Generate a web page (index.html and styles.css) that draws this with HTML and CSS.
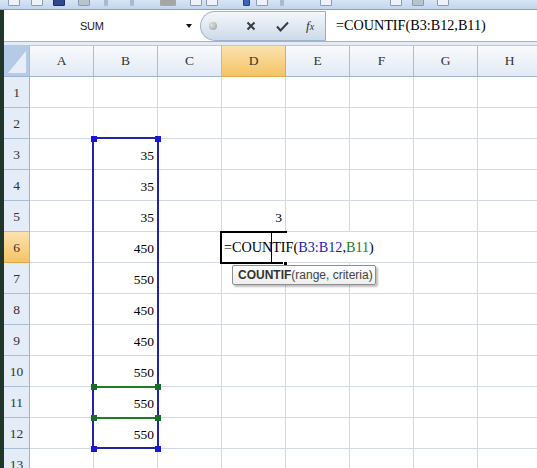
FILE: index.html
```html
<!DOCTYPE html>
<html lang="en">
<head>
<meta charset="UTF-8">
<title>COUNTIF</title>
<link rel="stylesheet" href="styles.css">
</head>
<body>

<div class="toolbar">
  <span class="tb-icon light" style="left: 8px;"></span>
  <span class="tb-icon light" style="left: 31px;"></span>
  <span class="tb-icon dark" style="left: 53px;"></span>
  <span class="tb-icon grey" style="left: 78px;"></span>
  <span class="tb-icon faint" style="left: 104px;"></span>
  <span class="tb-icon faint" style="left: 130px;"></span>
  <span class="tb-icon block" style="left: 160px;"></span>
  <span class="tb-icon light" style="left: 190px;"></span>
  <span class="tb-icon light" style="left: 206px;"></span>
  <span class="tb-icon blue" style="left: 243px;"></span>
  <span class="tb-icon light" style="left: 256px;"></span>
  <span class="tb-icon faint" style="left: 280px;"></span>
  <span class="tb-icon light" style="left: 320px;"></span>
  <span class="tb-icon light" style="left: 390px;"></span>
  <span class="tb-icon grey" style="left: 412px;"></span>
  <span class="tb-icon light" style="left: 437px;"></span>
</div>

<div class="app">
  <div class="formula-bar">
    <div class="name-box">
      <span class="name">SUM</span>
      <span class="drop"></span>
    </div>
    <div class="fx-buttons">
      <span class="knob"></span>
      <svg class="btn-x" width="10" height="10" viewBox="0 0 10 10">
        <path d="M1.5 1.5 L8.5 8.5 M8.5 1.5 L1.5 8.5" stroke="#3b3b3b" stroke-width="2" fill="none"/>
      </svg>
      <svg class="btn-ok" width="13" height="11" viewBox="0 0 13 11">
        <path d="M1 5.5 L4.5 9.5 L12 1.5" stroke="#3b3b3b" stroke-width="2" fill="none"/>
      </svg>
      <span class="fx">f<span class="fx-x">x</span></span>
    </div>
    <div class="formula">=COUNTIF(B3:B12,B11)</div>
  </div>
  <div class="bar-gap"></div>

  <div class="sheet">
    <div class="grid">
      <div class="hd corner"></div><div class="hd col">A</div><div class="hd col">B</div><div class="hd col">C</div><div class="hd col on">D</div><div class="hd col">E</div><div class="hd col">F</div><div class="hd col">G</div><div class="hd col">H</div>

      <div class="rh">1</div><div class="c"></div><div class="c"></div><div class="c"></div><div class="c"></div><div class="c"></div><div class="c"></div><div class="c"></div><div class="c"></div>
      <div class="rh">2</div><div class="c"></div><div class="c"></div><div class="c"></div><div class="c"></div><div class="c"></div><div class="c"></div><div class="c"></div><div class="c"></div>
      <div class="rh">3</div><div class="c"></div><div class="c num">35</div><div class="c"></div><div class="c"></div><div class="c"></div><div class="c"></div><div class="c"></div><div class="c"></div>
      <div class="rh">4</div><div class="c"></div><div class="c num">35</div><div class="c"></div><div class="c"></div><div class="c"></div><div class="c"></div><div class="c"></div><div class="c"></div>
      <div class="rh">5</div><div class="c"></div><div class="c num">35</div><div class="c"></div><div class="c num">3</div><div class="c"></div><div class="c"></div><div class="c"></div><div class="c"></div>
      <div class="rh on">6</div><div class="c"></div><div class="c num">450</div><div class="c"></div><div class="c edit"><span class="edit-text">=COUNTIF(<span class="ref-blue">B3:B12</span>,<span class="ref-green">B11</span>)</span></div><div class="c flow"></div><div class="c"></div><div class="c"></div><div class="c"></div>
      <div class="rh">7</div><div class="c"></div><div class="c num">550</div><div class="c"></div><div class="c"></div><div class="c"></div><div class="c"></div><div class="c"></div><div class="c"></div>
      <div class="rh">8</div><div class="c"></div><div class="c num">450</div><div class="c"></div><div class="c"></div><div class="c"></div><div class="c"></div><div class="c"></div><div class="c"></div>
      <div class="rh">9</div><div class="c"></div><div class="c num">450</div><div class="c"></div><div class="c"></div><div class="c"></div><div class="c"></div><div class="c"></div><div class="c"></div>
      <div class="rh">10</div><div class="c"></div><div class="c num">550</div><div class="c"></div><div class="c"></div><div class="c"></div><div class="c"></div><div class="c"></div><div class="c"></div>
      <div class="rh">11</div><div class="c"></div><div class="c num">550</div><div class="c"></div><div class="c"></div><div class="c"></div><div class="c"></div><div class="c"></div><div class="c"></div>
      <div class="rh">12</div><div class="c"></div><div class="c num">550</div><div class="c"></div><div class="c"></div><div class="c"></div><div class="c"></div><div class="c"></div><div class="c"></div>
      <div class="rh">13</div><div class="c"></div><div class="c"></div><div class="c"></div><div class="c"></div><div class="c"></div><div class="c"></div><div class="c"></div><div class="c"></div>
    </div>

    <!-- range B3:B12 and the B11 reference -->
    <div class="range-box"></div>
    <div class="ref-line" style="top: 341px;"></div>
    <div class="ref-line" style="top: 372px;"></div>
    <span class="handle blue" style="left: 87px; top: 91px;"></span>
    <span class="handle blue" style="left: 151px; top: 91px;"></span>
    <span class="handle blue" style="left: 87px; top: 401px;"></span>
    <span class="handle blue" style="left: 151px; top: 401px;"></span>
    <span class="handle green" style="left: 87px; top: 339px;"></span>
    <span class="handle green" style="left: 151px; top: 339px;"></span>
    <span class="handle green" style="left: 87px; top: 370px;"></span>
    <span class="handle green" style="left: 151px; top: 370px;"></span>

    <!-- active cell D6 in edit mode -->
    <div class="active-cell"></div>
    <span class="fill-handle"></span>
    <span class="caret"></span>

    <div class="tooltip"><b>COUNTIF</b>(range, criteria)</div>
  </div>
</div>

</body>
</html>
```

FILE: styles.css
```css
* {
  box-sizing: border-box;
}
body {
  margin: 0;
  width: 537px;
  height: 468px;
  overflow: hidden;
  background-color: #fff;
  font-family: "Liberation Serif", "Times New Roman", serif;
}
.toolbar {
  position: relative;
  height: 10px;
  background: linear-gradient(#d7e4f5, #c2d5ee);
  border-bottom: 1px solid #8aa1c1;
  overflow: hidden;
}
.tb-icon {
  position: absolute;
  top: -6px;
  width: 12px;
  height: 12px;
  border: 1px solid #8b9bb0;
  border-radius: 1px;
}
.tb-icon.light {
  background: #eef3fa;
}
.tb-icon.dark {
  background: #2f4a8a;
  border-color: #1d2f60;
}
.tb-icon.grey {
  background: #b9c3cf;
}
.tb-icon.faint {
  width: 4px;
  border: none;
  background: #a9bad2;
}
.tb-icon.block {
  width: 16px;
  background: #a6a6a6;
  border-color: #a6a6a6;
}
.tb-icon.blue {
  width: 7px;
  background: #3d63b6;
  border-color: #23408a;
}
.app {
  border-left: 4px solid #21362a;
}
.formula-bar {
  display: flex;
  height: 32px;
  background: #fff;
  border-bottom: 1px solid #a3b3c8;
}
.name-box {
  display: flex;
  align-items: center;
  width: 196px;
  padding-left: 76px;
}
.name {
  font-family: "Liberation Sans", Arial, sans-serif;
  font-size: 11px;
  color: #1a1a1a;
  letter-spacing: -0.3px;
}
.drop {
  margin-left: auto;
  margin-right: 8px;
  width: 0;
  height: 0;
  border-left: 3.5px solid transparent;
  border-right: 3.5px solid transparent;
  border-top: 4px solid #111;
}
.fx-buttons {
  display: flex;
  align-items: center;
  width: 126px;
  height: 30px;
  margin-top: 1px;
  background: linear-gradient(#f4f7fb, #dfe7f2 55%, #cdd9ea);
  border: 1px solid #a0b2ca;
  border-right: 1px solid #9aaac0;
  border-radius: 16px 0 0 16px;
}
.knob {
  width: 8px;
  height: 8px;
  margin-left: 8px;
  border-radius: 50%;
  background: radial-gradient(circle at 35% 35%, #e2e2e2, #9a9a9a);
}
.btn-x {
  margin-left: 29px;
}
.btn-ok {
  margin-left: 20px;
}
.fx {
  margin-left: 17px;
  font-style: italic;
  font-size: 13px;
  color: #333;
}
.fx-x {
  font-size: 10px;
}
.formula {
  display: flex;
  align-items: center;
  padding-left: 10px;
  font-size: 14.2px;
  color: #000;
}
.bar-gap {
  height: 3px;
  background: #e3ebf6;
}
.sheet {
  position: relative;
}
.grid {
  display: grid;
  grid-template-columns: 26px repeat(8, 64px);
  grid-template-rows: 32px;
  grid-auto-rows: 31px;
}
.hd {
  display: flex;
  align-items: center;
  justify-content: center;
  font-size: 13.5px;
  color: #333;
  background: linear-gradient(#f8fafd, #e2eaf5);
  border-right: 1px solid #a9bdd5;
  border-bottom: 1px solid #9fb5cf;
  border-top: 1px solid #b8c8dc;
}
.hd.corner {
  background: #b5cae6;
  position: relative;
  overflow: hidden;
}
.hd.corner::after {
  content: "";
  position: absolute;
  right: 3px;
  bottom: 3px;
  border-left: 18px solid transparent;
  border-bottom: 22px solid #e8eef7;
}
.hd.on {
  background: linear-gradient(#fbe2ae, #f3c466);
  border-right-color: #e1a94a;
  border-bottom-color: #e1a94a;
}
.rh {
  display: flex;
  align-items: center;
  justify-content: center;
  padding-top: 2px;
  font-size: 13.5px;
  color: #333;
  background: #e4ecf7;
  border-right: 1px solid #9fb5cf;
  border-bottom: 1px solid #a9bdd5;
}
.rh.on {
  background: linear-gradient(#fbe2ae, #f3c466);
  border-bottom-color: #e1a94a;
}
.c {
  border-right: 1px solid #d3d9e2;
  border-bottom: 1px solid #d3d9e2;
  font-size: 13.5px;
}
.c.num {
  display: flex;
  align-items: center;
  justify-content: flex-end;
  padding: 3px 3px 0 0;
}
.c.edit {
  position: relative;
  z-index: 1;
  display: flex;
  align-items: center;
  padding: 1px 0 0 2px;
  font-size: 14.2px;
  white-space: nowrap;
  border-right-color: transparent;
}
.c.flow {
  border-right-color: transparent;
}
.ref-blue {
  color: #2020c0;
}
.ref-green {
  color: #1b7a1b;
}
.range-box {
  position: absolute;
  left: 88px;
  top: 92px;
  width: 67px;
  height: 312px;
  border: 2px solid #2323a8;
}
.ref-line {
  position: absolute;
  left: 90px;
  width: 63px;
  height: 2px;
  background: #1f7a2a;
}
.handle {
  position: absolute;
  width: 6px;
  height: 6px;
}
.handle.blue {
  background: #1818d8;
}
.handle.green {
  background: #196b2a;
}
.active-cell {
  position: absolute;
  left: 216px;
  top: 186px;
  width: 67px;
  height: 33px;
  border: 2px solid #000;
  border-right: none;
  z-index: 2;
}
.fill-handle {
  position: absolute;
  left: 279px;
  top: 216px;
  width: 5px;
  height: 5px;
  background: #000;
  border: 1px solid #fff;
  z-index: 3;
}
.caret {
  position: absolute;
  left: 267px;
  top: 188px;
  width: 1px;
  height: 29px;
  background: #000;
  z-index: 3;
}
.tooltip {
  position: absolute;
  left: 228px;
  top: 220px;
  width: 144px;
  height: 20px;
  padding: 2px 0 0 5px;
  font-family: "Liberation Sans", Arial, sans-serif;
  font-size: 12px;
  color: #444;
  white-space: nowrap;
  background: linear-gradient(#ffffff, #eeeeee);
  border: 1px solid #8f8f8f;
  border-radius: 2px;
  box-shadow: 2px 2px 2px rgba(0, 0, 0, 0.25);
  z-index: 4;
}
.tooltip b {
  color: #333;
}
```
